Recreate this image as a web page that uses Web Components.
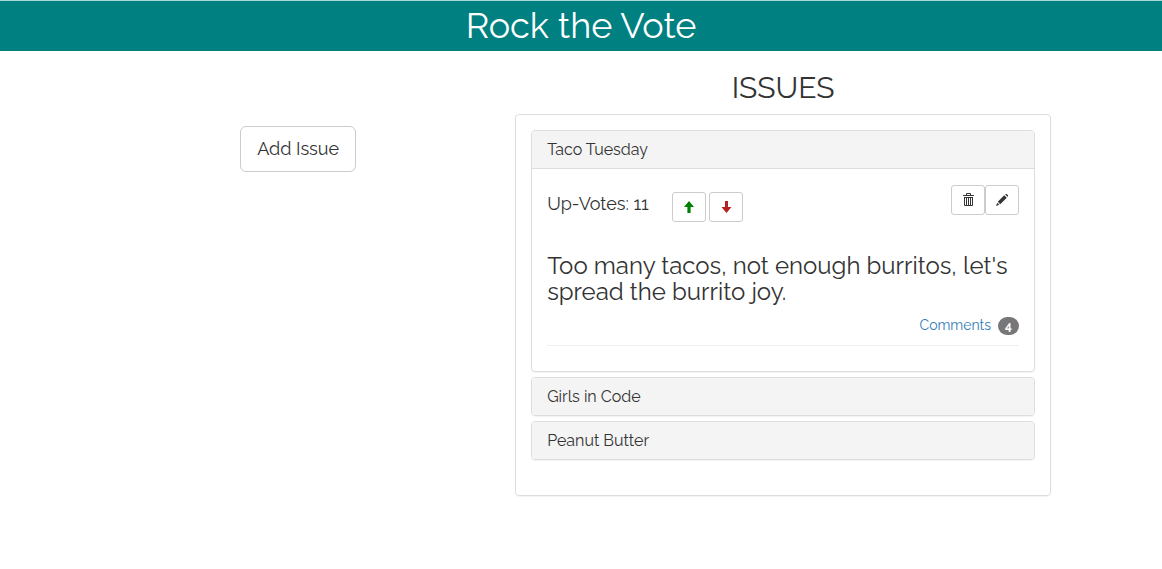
<!DOCTYPE html>
<html lang="en">
<head>
<meta charset="utf-8">
<meta name="viewport" content="width=device-width, initial-scale=1">
<title>Rock the Vote</title>
<style>
body { margin: 0; background: #fff; color: #333; font: 14px/20px Raleway, Lato, "Open Sans", sans-serif; }
</style>
</head>
<body>
<vote-app></vote-app>

<template id="vote-app">
<style>
:host { display: block; }
main { display: grid; grid-template-columns: 5fr 7fr; max-width: 970px; margin: 0 auto; }
.side { padding: 75px 15px 0; text-align: center; }
.list { padding: 20px 15px; min-width: 0; }
h2 { margin: 0 0 10px; font-size: 30px; line-height: 33px; font-weight: 400; text-align: center; }
.well { border: 1px solid #ddd; border-radius: 4px; padding: 15px 15px 35px; box-shadow: 0 1px 1px rgba(0,0,0,.05); display: grid; gap: 5px; }
</style>
<page-banner>Rock the Vote</page-banner>
<main>
<section class="side"><tool-button size="large">Add Issue</tool-button></section>
<section class="list">
<h2>ISSUES</h2>
<div class="well">
<issue-panel heading="Taco Tuesday">
<issue-detail votes="11" comments="4">Too many tacos, not enough burritos, let's spread the burrito joy.</issue-detail>
</issue-panel>
<issue-panel heading="Girls in Code"></issue-panel>
<issue-panel heading="Peanut Butter"></issue-panel>
</div>
</section>
</main>
</template>

<template id="page-banner">
<style>
:host { display: block; background: #008080; border-top: 1px solid #a6d8d8; color: #fff; text-align: center; }
h1 { margin: 0; padding: 4px 0 6px; font-size: 36px; line-height: 40px; font-weight: 400; }
</style>
<h1><slot></slot></h1>
</template>

<template id="tool-button">
<style>
:host { display: inline-block; vertical-align: top; }
button { display: flex; align-items: center; justify-content: center; box-sizing: border-box; min-width: 34px; height: 30px; padding: 0 10px; border: 1px solid #ccc; border-radius: 3px; background: #fff; color: inherit; font: inherit; cursor: pointer; }
button:hover { background: #e6e6e6; }
:host([size="large"]) button { height: 46px; padding: 0 16px; border-radius: 6px; font-size: 18px; line-height: 24px; }
</style>
<button type="button"><slot></slot></button>
</template>

<template id="issue-panel">
<style>
:host { display: block; border: 1px solid #ddd; border-radius: 4px; box-shadow: 0 1px 1px rgba(0,0,0,.05); overflow: hidden; }
h4 { margin: 0; padding: 10px 15px; background: #f4f4f4; font-size: 16px; line-height: 17px; font-weight: 400; }
.body { padding: 16px 15px 25px; border-top: 1px solid #ddd; }
.body[hidden] { display: none; }
</style>
<h4></h4>
<div class="body"><slot></slot></div>
</template>

<template id="issue-detail">
<style>
:host { display: block; }
.bar { display: flex; align-items: flex-start; justify-content: space-between; }
.votes { display: flex; gap: 3px; padding-top: 7px; }
.count { width: 122px; font-size: 18px; line-height: 24px; }
.tools { display: flex; }
svg { display: block; width: 12px; height: 12px; }
.trash { height: 14px; }
.up { color: #008000; }
.down { color: #b22222; }
h3 { margin: 31px 0 10px; font-size: 24px; line-height: 26px; font-weight: 400; }
.comments { display: flex; align-items: flex-end; justify-content: flex-end; gap: 7px; padding-bottom: 10px; border-bottom: 1px solid #eee; }
a { color: #337ab7; text-decoration: none; }
.badge { min-width: 21px; box-sizing: border-box; border-radius: 10px; padding: 3px 7px; background: #777; color: #fff; font-size: 12px; line-height: 12px; font-weight: 700; text-align: center; }
</style>
<div class="bar">
<div class="votes">
<span class="count"></span>
<tool-button class="up" label="Vote up"><svg viewBox="0 0 12 12" fill="currentColor"><path d="M6 0L11 6H7.6V12H4.4V6H1Z"/></svg></tool-button>
<tool-button class="down" label="Vote down"><svg viewBox="0 0 12 12" fill="currentColor"><path d="M6.5 12L1.5 6H5V0H8V6H11.5Z"/></svg></tool-button>
</div>
<div class="tools">
<tool-button label="Delete issue"><svg class="trash" viewBox="0 0 12 14" fill="none" stroke="currentColor"><path d="M1 2.5H12M4.5 2.5V.5H8.5V2.5M2.5 4V12.5H10.5V4M2.5 4.5H10.5M4.5 4V12M6.5 4V12M8.5 4V12"/></svg></tool-button>
<tool-button label="Edit issue"><svg viewBox="0 0 12 12" fill="currentColor"><path d="M8.2 1.2L10.8 3.8L4.2 10.2L1.8 7.8ZM9.2.6L9.8 0H10.7L12 1.3V2.2L11.4 2.8ZM1.3 8.7L3.3 10.7L0 12Z"/></svg></tool-button>
</div>
</div>
<h3><slot></slot></h3>
<div class="comments"><a href="#comments">Comments</a><span class="badge"></span></div>
</template>

<script>
class Part extends HTMLElement {
  constructor() {
    super();
    this.attachShadow({ mode: "open" });
    this.shadowRoot.append(document.getElementById(this.localName).content.cloneNode(true));
  }
  find(selector) { return this.shadowRoot.querySelector(selector); }
}
class ToolButton extends Part {
  connectedCallback() {
    if (this.hasAttribute("label")) this.find("button").setAttribute("aria-label", this.getAttribute("label"));
  }
}
class IssuePanel extends Part {
  connectedCallback() {
    this.find("h4").textContent = this.getAttribute("heading");
    this.find(".body").hidden = !this.firstElementChild;
  }
}
class IssueDetail extends Part {
  connectedCallback() {
    this.find(".count").textContent = "Up-Votes: " + this.getAttribute("votes");
    this.find(".badge").textContent = this.getAttribute("comments");
  }
}
customElements.define("tool-button", ToolButton);
customElements.define("issue-panel", IssuePanel);
customElements.define("issue-detail", IssueDetail);
customElements.define("page-banner", class extends Part {});
customElements.define("vote-app", class extends Part {});
</script>
</body>
</html>
